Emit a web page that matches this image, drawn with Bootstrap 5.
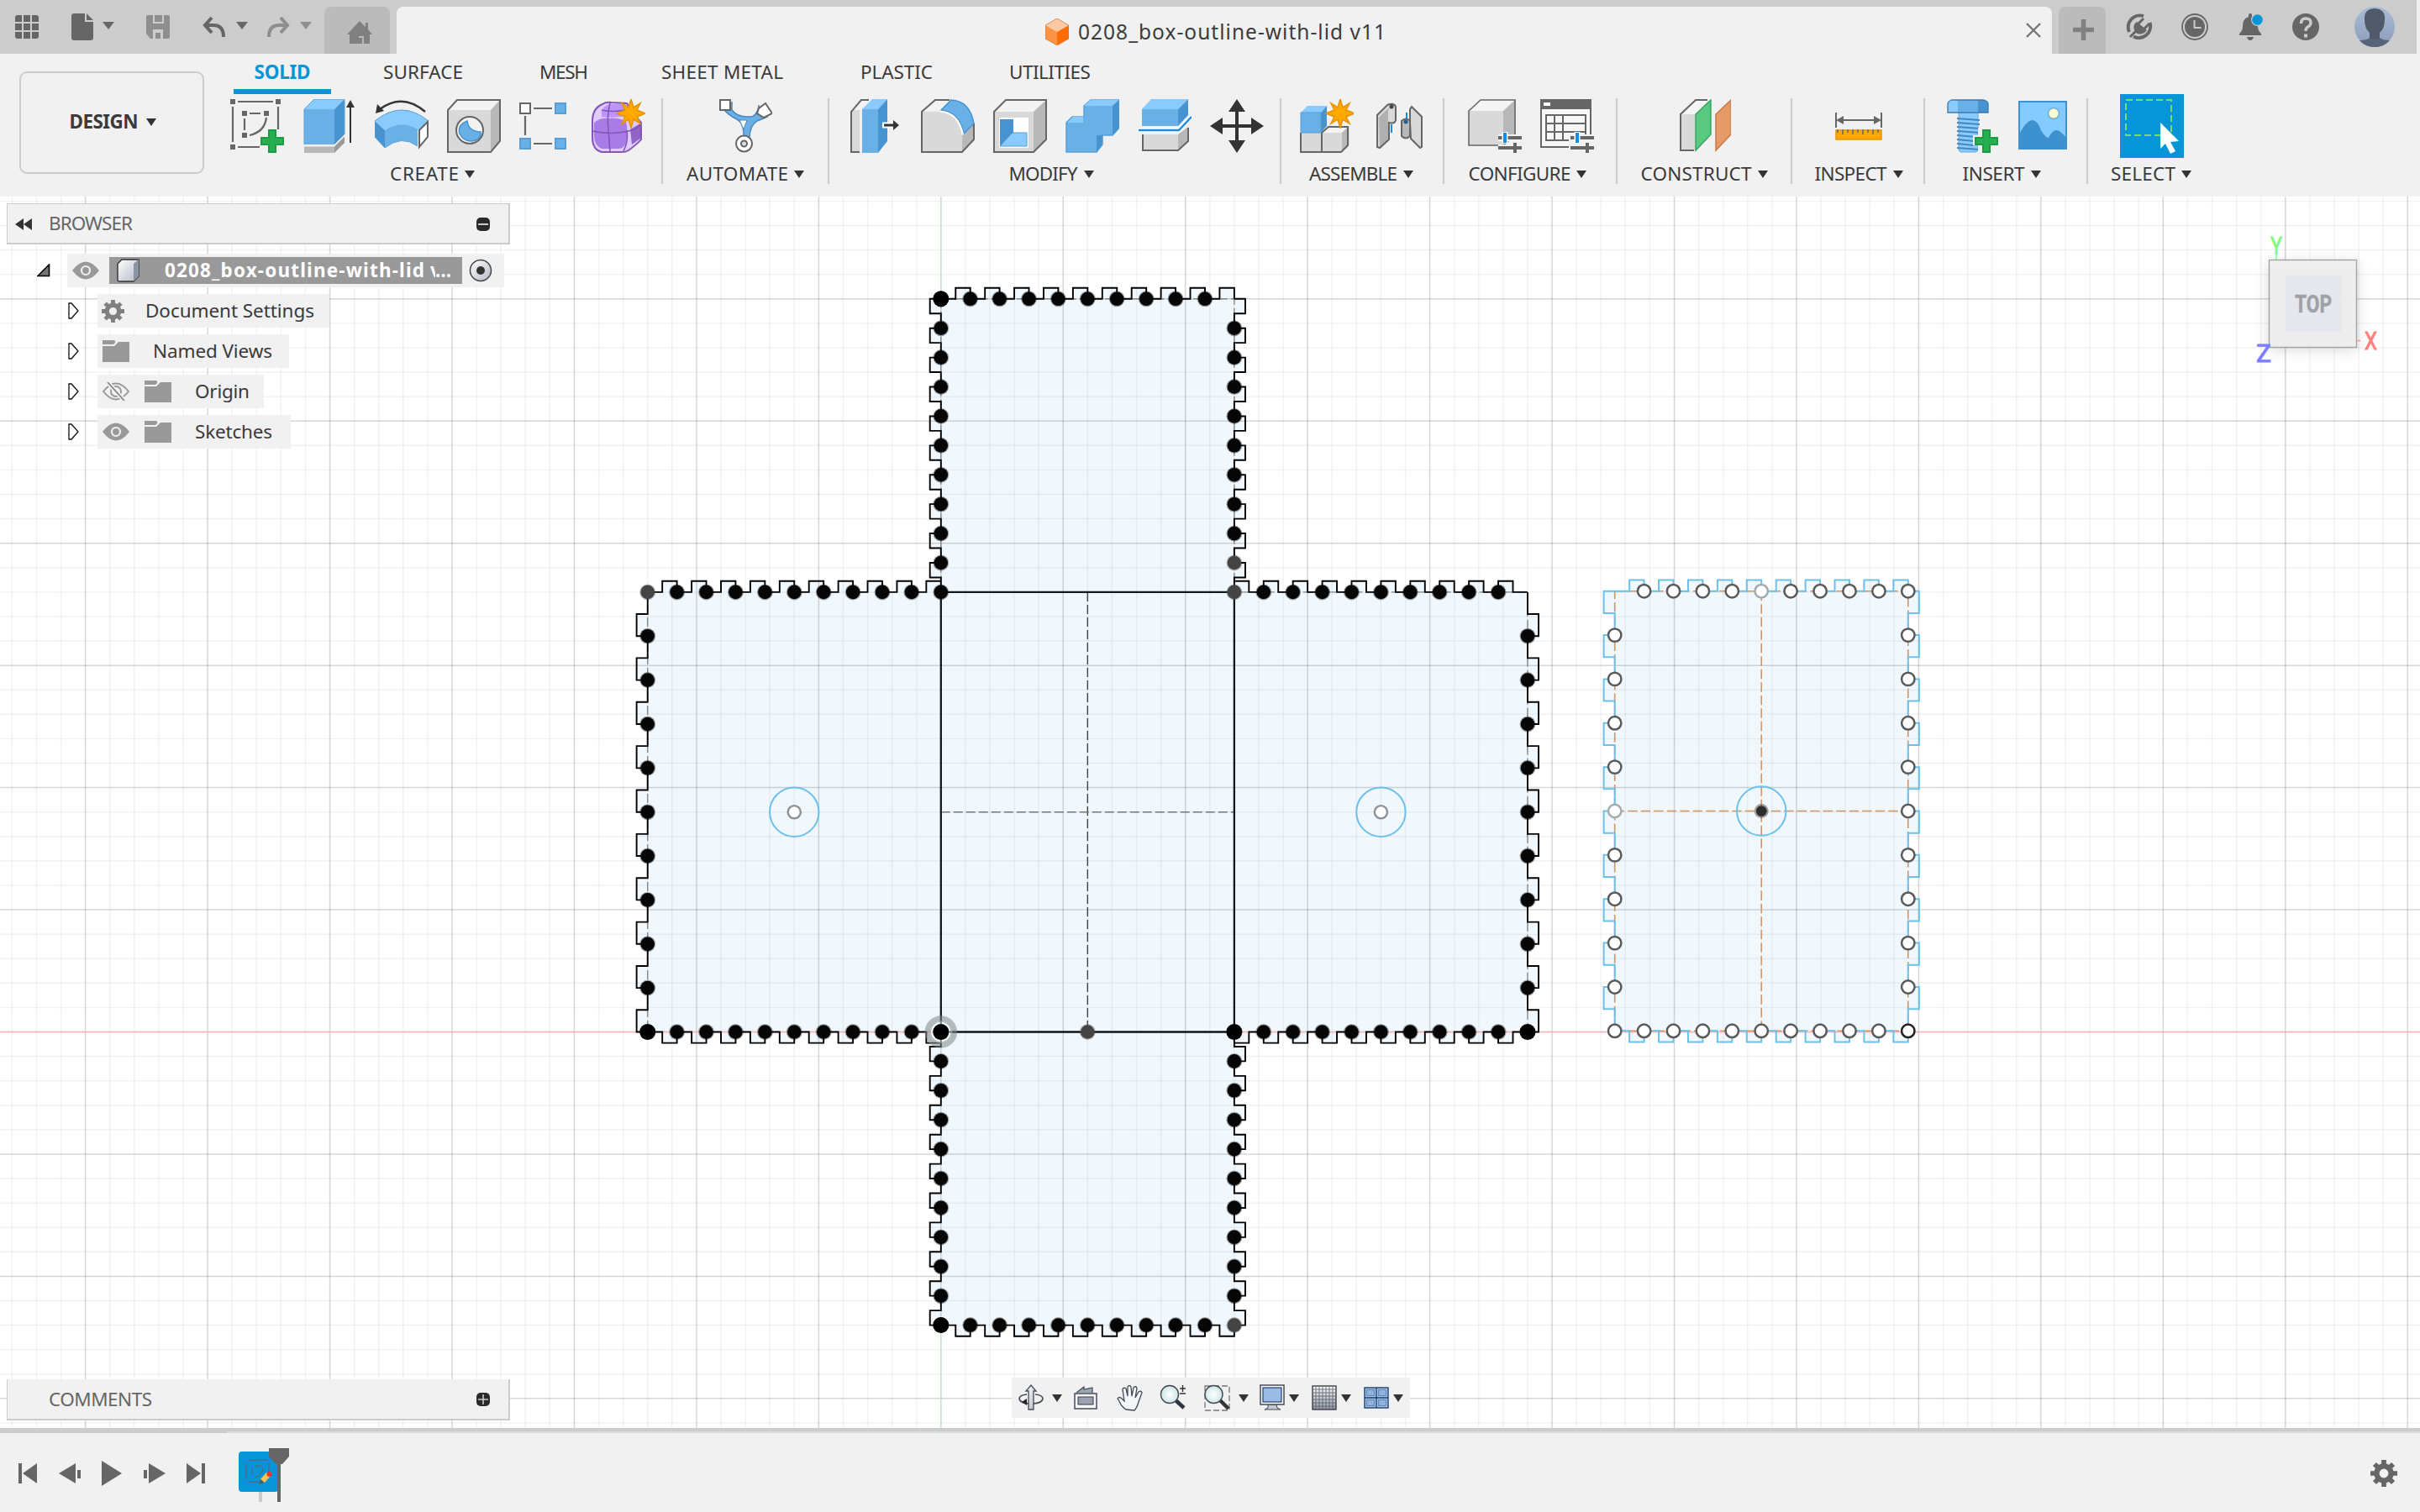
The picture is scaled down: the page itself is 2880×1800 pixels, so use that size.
<!DOCTYPE html>
<html lang="en">
<head>
<meta charset="utf-8">
<title>0208_box-outline-with-lid v11</title>
<link href="https://cdn.jsdelivr.net/npm/bootstrap@5.3.0/dist/css/bootstrap.min.css" rel="stylesheet">
<script src="https://cdn.jsdelivr.net/npm/bootstrap@5.3.0/dist/js/bootstrap.bundle.min.js"></script>
<style>
html,body{height:100%}
body{width:2880px;height:1800px;overflow:hidden;background:#f1f1f1;color:#3a3a3a;font-family:"Noto Sans","Open Sans",sans-serif;font-size:22.5px;line-height:1}
svg{display:block;flex:none}
.fit{white-space:nowrap;display:inline-block}
.titlebar{height:64px;background:#ccc;margin-right:4px;color:#666}
.quick{width:386px;padding:16px 0 0 17px}
.tri{width:0;height:0;border:solid transparent;border-width:9px 7px 0;border-top-color:#666;flex:none}
.tri-s{width:0;height:0;border:solid transparent;border-width:9px 6px 0;border-top-color:#333;flex:none}
.hometab{width:78px;height:56px;margin-top:8px;background:#bbb;border-radius:8px 8px 0 0;padding:17px 0 0 27px}
.doctab{width:1970px;height:56px;margin:8px 0 0 8px;background:#f1f1f1;border-radius:8px 8px 0 0;font-size:24.5px;color:#3c3c3c;padding:0 13px 0 772px}
.doctab .fit{padding-top:4px}
.addtab{width:56px;height:56px;margin:8px 0 0 8px;background:#bbb;border-radius:8px 8px 0 0;padding:15px 0 0 17px}
.ribbon{height:170px}
.workspace{width:220px;height:122px;border:2.5px solid #ccc;border-radius:9px;margin:21px 0 0 23px;font-weight:700;padding-left:2px}
.tools{margin-left:10px}
.rtabs{height:47px;padding:11px 0 0 2px}
.rtab{height:36px;padding:0}
.rtab.active{height:37px;color:#0696d7;font-weight:700;border-bottom:6px solid #0696d7}
.rgroup{height:102px;margin-top:6px;border-right:2px solid #ccc}
.rgroup:last-child{border:0}
.rgroup .icons{gap:22px;height:64px;margin-top:1px;padding-left:2px}
.rgroup .cap{margin-top:14px;height:24px;gap:7px}
.rgroup .cap .tri-s{margin-top:7px}
.selbox{width:76px;height:76px;background:#0696d7;margin:-6px 0}
.viewport{height:1466px;background:#fff;position:relative;overflow:hidden}
.drawing{position:absolute;left:0;top:0}
.panelhead{position:absolute;left:8px;width:599px;height:49px;background:#f1f1f1;border:1px solid #ccc;border-width:1px 2px 2px 1px;color:#666;padding:1px 22px 0 9px}
.tree{position:absolute;left:44px;top:68px}
.tree>div{margin-bottom:8px;height:40px}
.node{background:#f1f1f1;height:40px}
.node>.fit{padding-top:1px}
.rootname{background:#999;width:420px;height:32px;color:#fff;font-weight:700}
.clipv{width:6px;overflow:hidden;line-height:1.3;margin-left:7px}
.navbar2{position:absolute;left:1204px;top:1406px;width:474px;height:48px;background:#f1f1f1}
.timeline{height:100px;border-top:6px solid #ccc;position:relative}
.timeline .edge{position:absolute;left:270px;right:0;top:-2px;height:2px;background:#dcdcdc}
</style>
</head>
<body class="d-flex flex-column">
<svg width="0" height="0" class="position-absolute">
<defs>
<symbol id="star" viewBox="-18 -18 36 36"><path d="M0-17L3-7 11-12 7-4 17 0 7 4 11 12 3 7 0 17-3 7-11 12-7 4-17 0-7-4-11-12-3-7Z" fill="#ffa900" stroke="#e59400" stroke-width="1.6"/></symbol>
<symbol id="plus" viewBox="0 0 28 28"><path d="M10 1h8v9h9v8h-9v9h-8v-9H1v-8h9z" fill="#28b050" stroke="#1b9c44" stroke-width="2"/></symbol>
<symbol id="folder" viewBox="0 0 32 28"><path d="M0 1h14q2 1 1 3l-2 2H0zM0 8h14l5-5h13v24H0z" fill="#999"/></symbol>
<symbol id="eye" viewBox="0 0 32 22"><path d="M0 11Q16-10 32 11 16 32 0 11Z" fill="#999"/><circle cx="16" cy="11" r="5" fill="none" stroke="#f1f1f1" stroke-width="2.2"/></symbol>
<symbol id="gear" viewBox="-14 -14 28 28"><circle r="7.500" fill="none" stroke="currentColor" stroke-width="5.500"/><g stroke="currentColor" stroke-width="5"><path d="M0-14V-9M0 14V9M-14 0H-9M14 0H9M-9.700-9.700L-6.500-6.500M9.700 9.700L6.500 6.500M-9.700 9.700L-6.500 6.500M9.700-9.700L6.500-6.500"/></g></symbol>
<linearGradient id="silver" x1="0" y1="0" x2="1" y2="1"><stop offset="0" stop-color="#fff"/><stop offset="1" stop-color="#b4b9c6"/></linearGradient>
<radialGradient id="lens"><stop offset="0" stop-color="#fff"/><stop offset="1" stop-color="#cfe6e6"/></radialGradient>
<linearGradient id="sky" x1="0" y1="0" x2="0" y2="1"><stop offset="0" stop-color="#a9bbd4"/><stop offset="1" stop-color="#8b9dba"/></linearGradient>
<linearGradient id="fade" x1="0" y1="0" x2="0" y2="1"><stop offset="0" stop-color="#fff"/><stop offset="1" stop-color="#8f96a6"/></linearGradient>
</defs></svg>

<!-- title bar -->
<header class="titlebar d-flex">
  <div class="quick d-flex">
    <svg width="30" height="32" viewBox="0 0 30 32"><path d="M4 2h5v8H1V5q0-3 3-3zM11 2h8v8h-8zM21 2h5q3 0 3 3v5h-8zM1 12h8v8H1zM11 12h8v8h-8zM21 12h8v8h-8zM1 22h8v8H4q-3 0-3-3zM11 22h8v8h-8zM21 22h8v5q0 3-3 3h-5z" fill="#666"/></svg>
    <svg class="ms-auto" width="26" height="32" viewBox="0 0 26 32" style="margin-right:11px"><path d="M3 0h13v10h10v19q0 3-3 3H3q-3 0-3-3V3q0-3 3-3zM18 0l8 8h-8z" fill="#666"/></svg>
    <i class="tri" style="margin:10px 38px 0 0"></i>
    <svg width="28" height="32" viewBox="0 0 28 32" style="margin-right:39px"><path d="M2 2h24q2 0 2 2v24q0 2-2 2H5l-5-6V4q0-2 2-2zM8 2v10h13V2h-2v8h-9V2zM8 19v11h3v-7h6v7h3V19z" fill="#8e8e8e" fill-rule="evenodd"/></svg>
    <svg width="28" height="30" viewBox="0 0 28 30" style="margin-right:12px"><path d="M11 5L3 14l8 9M3 14h10q12 0 12 14" fill="none" stroke="#666" stroke-width="4"/></svg>
    <i class="tri" style="margin:10px 22px 0 0"></i>
    <svg width="28" height="30" viewBox="0 0 28 30" style="margin-right:12px"><path d="M17 5l8 9-8 9M25 14H15Q3 14 3 28" fill="none" stroke="#8e8e8e" stroke-width="4"/></svg>
    <i class="tri" style="margin:10px 15px 0 0;border-top-color:#8e8e8e"></i>
  </div>
  <div class="hometab"><svg width="30" height="28" viewBox="0 0 30 28"><path d="M15 0l7 7V2h3v8l5 6h-3v11h-7v-9h-6v9H3V16H0zM13 27v-7h5v7z" fill="#808080"/></svg></div>
  <div class="doctab d-flex align-items-center">
    <svg width="28" height="32" viewBox="0 0 28 32" style="margin:4px 11px 0 0"><path d="M14 0l14 8-14 8L0 8z" fill="#ffc9a3"/><path d="M0 8l14 8v16L0 24z" fill="#ff9345"/><path d="M28 8L14 16v16l14-8z" fill="#ff6c00"/><path d="M14 0l14 8v16l-14 8L0 24V8z" fill="none" stroke="#c77b45" stroke-width=".8"/></svg>
    <span class="fit" data-w="366">0208_box-outline-with-lid v11</span>
    <svg class="ms-auto" width="18" height="18" viewBox="0 0 18 18"><path d="M1 1l16 16M17 1L1 17" stroke="#777" stroke-width="2.400"/></svg>
  </div>
  <div class="addtab"><svg width="25" height="25" viewBox="0 0 25 25"><path d="M12.500 0v25M0 12.500h25" stroke="#808080" stroke-width="5.500"/></svg></div>
  <div class="d-flex" style="padding:16px 0 0 24px;gap:34px">
    <svg width="32" height="32" viewBox="0 0 32 32"><path d="M21 3.200A13.800 13.800 0 0 0 4 22M9 27.500A13.800 13.800 0 0 0 28.500 11" fill="none" stroke="#666" stroke-width="4"/><path d="M10 13l3-3 12 10-3 3q-6 3-10 0-4-4-2-10z" fill="#666"/><path d="M14 13l7-7M21 19l7-7M13 20L5 28" stroke="#666" stroke-width="3"/></svg>
    <svg width="32" height="32" viewBox="0 0 32 32"><circle cx="16" cy="16" r="15" fill="none" stroke="#666" stroke-width="1.800"/><circle cx="16" cy="16" r="12" fill="#666"/><path d="M15.500 8v9h8" fill="none" stroke="#ccc" stroke-width="2"/></svg>
    <svg width="32" height="32" viewBox="0 0 32 32"><path d="M14 1q2-2 4 0v3q7 2 7 11 0 6 4 9v2H3v-2q4-3 4-9 0-9 7-11zM12 28h8q-1 4-4 4t-4-4z" fill="#666"/><circle cx="24.500" cy="7.500" r="7.500" fill="#ccc"/><circle cx="24.500" cy="7.500" r="6.300" fill="#0696d7"/></svg>
    <svg width="32" height="32" viewBox="0 0 32 32"><circle cx="16" cy="16" r="16" fill="#666"/><path d="M10.500 12q0-6 5.500-6 6 0 6 5 0 3-3.500 5-2.500 1.500-2.500 5" fill="none" stroke="#ccc" stroke-width="3.400"/><path d="M14 24.500h4v4h-4z" fill="#ccc"/></svg>
  </div>
  <svg width="48" height="48" viewBox="0 0 48 48" style="margin:8px 0 0 42px"><defs><clipPath id="av"><circle cx="24" cy="24" r="24"/></clipPath></defs><g clip-path="url(#av)"><path d="M0 0h48v48H0z" fill="url(#sky)"/><path d="M24 2q13 1 12 13 0 11-6 16v7q3 2 12 4v8H6v-8q9-2 12-4v-7q-6-5-6-16Q11 3 24 2z" fill="#505a69"/><path d="M6 40q9 0 12-3 6 4 12 0 3 3 12 3v8H6z" fill="#566479"/></g></svg>
</header>

<!-- ribbon -->
<section class="ribbon d-flex">
  <div class="workspace d-flex align-items-center justify-content-center flex-none" style="gap:9px;padding-bottom:1px"><span class="fit" data-w="82">DESIGN</span><i class="tri-s"></i></div>
  <div class="tools">
    <nav class="rtabs d-flex">
      <div class="rtab active text-center" style="margin-left:23px;width:116px"><span class="fit" data-w="67">SOLID</span></div>
      <div class="rtab" style="margin-left:62px"><span class="fit" data-w="95">SURFACE</span></div>
      <div class="rtab" style="margin-left:91px"><span class="fit" data-w="58">MESH</span></div>
      <div class="rtab" style="margin-left:87px"><span class="fit" data-w="145">SHEET METAL</span></div>
      <div class="rtab" style="margin-left:92px"><span class="fit" data-w="86">PLASTIC</span></div>
      <div class="rtab" style="margin-left:91px"><span class="fit" data-w="97">UTILITIES</span></div>
    </nav>
    <div class="d-flex">
      <div class="rgroup" style="width:536px">
        <div class="icons d-flex justify-content-center">
          <svg width="64" height="64" viewBox="0 0 64 64"><g stroke="#666" stroke-width="2.200" fill="none"><path d="M9 3h42M3 9v42M57 9v27M9 57h26M23 17h13M17 23v14M43 22q-2 17-20 21"/></g><path d="M0 0h6v6H0zM54 0h6v6h-6zM0 54h6v6H0zM14 14h6v6h-6zM40 14h6v6h-6zM14 40h6v6h-6z" fill="#666"/><use href="#plus" x="36" y="36" width="28" height="28"/></svg>
          <svg width="64" height="64" viewBox="0 0 64 64"><path d="M2 12L14 0h36L38 12z" fill="#8acbff"/><path d="M38 12L50 0v42L38 54z" fill="#4693cf"/><path d="M2 12h36v42H2z" fill="#69b0e7"/><path d="M2 54V12L14 0h36v42" fill="none" stroke="#5a9fd4"/><path d="M2 56.500h36V64H2z" fill="#b8b8b8"/><path d="M38 56.500l12-12V52L38 64z" fill="#999"/><path d="M57 52V8" stroke="#333" stroke-width="2"/><path d="M52 10L57 1l5 9z" fill="#333"/></svg>
          <svg width="64" height="64" viewBox="0 0 64 64"><path d="M60 15Q33-8 6 12" fill="none" stroke="#333" stroke-width="2.400"/><path d="M1 17l2-11 8 8z" fill="#333"/><path d="M0 26Q32 0 64 26L52 37Q32 24 12 37z" fill="#8acbff"/><path d="M0 26l12 11v21L0 45z" fill="#4693cf"/><path d="M12 37Q32 24 51 36v20Q32 42 12 58z" fill="#69b0e7"/><path d="M0 26Q32 0 64 26M12 58Q32 42 51 56M0 26v19l12 13" fill="none" stroke="#5a9fd4"/><path d="M63 27v18L53 57V37z" fill="#fff" stroke="#666" stroke-width="2"/></svg>
          <svg width="64" height="64" viewBox="0 0 64 64"><path d="M1 13L12 1h51L52 13z" fill="#f3f3f3"/><path d="M52 13L63 1v49L52 63z" fill="#b8b8b8"/><path d="M1 13h51v50H1z" fill="#d9d9d9"/><path d="M1 13L12 1h51v49L52 63H1z" fill="none" stroke="#666" stroke-width="2"/><circle cx="27" cy="37" r="16" fill="#f3f3f3" stroke="#666" stroke-width="2"/><path d="M24 26Q12 31 15 41q6 12 19 8 7-3 6-10-15-1-16-13z" fill="#69b0e7" stroke="#4693cf" stroke-width="1.500"/></svg>
          <svg width="64" height="64" viewBox="0 0 64 64"><path d="M17 11h22M7 20v23M17 53h22" stroke="#666" stroke-width="2.200"/><path d="M1 5h12v12H1z" fill="#fff" stroke="#666" stroke-width="2"/><path d="M43 5h12v12H43zM1 47h12v12H1zM43 47h12v12H43z" fill="#69b0e7" stroke="#5a9fd4" stroke-width="2"/></svg>
          <svg width="64" height="64" viewBox="0 0 64 64"><path d="M1 24Q2 10 13 6 17 3 24 4l18 1Q52 20 59 28v20Q55 53 44 61q-3 2-8 2H12Q1 60 1 46z" fill="#e1cbfb" stroke="#8257b8" stroke-width="2"/><path d="M12 14q3-7 10-8h16l3 14q-15 3-29 1z" fill="#bd95fa"/><path d="M3 28q7-6 18-5 13-1 20 4 3 10 0 24-2 8-9 8H12Q2 55 3 38z" fill="#a87ce6"/><path d="M46 36l12-7v18l-10 7z" fill="#9264c8"/><path d="M1 38q22 5 43 0 10-2 15-8M22 4q-4 18-2 32 1 14 2 27M12 13q12 3 28 0M42 37q2 13-4 25" fill="none" stroke="#8257b8" stroke-width="1.600"/><use href="#star" x="29" y="-1" width="36" height="36"/></svg>
        </div>
        <div class="cap d-flex justify-content-center" style="padding-right:11px"><span class="fit" data-w="82">CREATE</span><i class="tri-s"></i></div>
      </div>
      <div class="rgroup" style="width:198px">
        <div class="icons d-flex justify-content-center" style="padding-left:0">
          <svg width="64" height="64" viewBox="0 0 64 64"><path d="M5 11Q13 20 22 24q9 5 8 22l-3 8h13l-3-8q0-14 9-20 8-3 12-5L48 8q-2 13-11 13-14 1-21-8V4L5 13z" fill="#69b0e7" stroke="#4a86ba" stroke-width="1.500"/><path d="M25 25h9l-4 11z" fill="#fff" stroke="#4a86ba"/><path d="M2 1h12v12H2z" fill="#fff" stroke="#666" stroke-width="2"/><path d="M56 5l8 12-10 5-8-5 2-6z" fill="#fff" stroke="#666" stroke-width="2"/><circle cx="30.500" cy="53" r="9.500" fill="#fff" stroke="#666" stroke-width="2"/><circle cx="30.500" cy="53" r="3.500" fill="#ddd" stroke="#666" stroke-width="2"/></svg>
        </div>
        <div class="cap d-flex justify-content-center"><span class="fit" data-w="121">AUTOMATE</span><i class="tri-s"></i></div>
      </div>
      <div class="rgroup" style="width:538px">
        <div class="icons d-flex justify-content-center" style="padding-left:4px">
          <svg width="64" height="64" viewBox="0 0 64 64"><path d="M3 13L15 1h9L13 13v50H3z" fill="#d9d9d9"/><path d="M3 13L15 1h9L13 13z" fill="#f3f3f3"/><path d="M13 63H3V15L15 1h9" fill="none" stroke="#666" stroke-width="2"/><path d="M16 12L28 0h18L35 12z" fill="#8acbff"/><path d="M35 12L46 0v50L35 64z" fill="#4693cf"/><path d="M16 12h19v52H16z" fill="#69b0e7"/><path d="M40 31h11" stroke="#fff" stroke-width="7"/><path d="M42 31h13" stroke="#333" stroke-width="3"/><path d="M53 25l7 6-7 6z" fill="#333"/></svg>
          <svg width="64" height="64" viewBox="0 0 64 64"><path d="M1 15L17 1h19L24 13z" fill="#f3f3f3"/><path d="M1 15h22q21 2 26 28v20H1z" fill="#d9d9d9"/><path d="M49 43l14-14v19L49 63z" fill="#b8b8b8"/><path d="M34 1H17L1 15v48h48l14-15V29" fill="none" stroke="#666" stroke-width="2"/><path d="M24 13L36 1q22 1 27 28L51 41Q46 16 24 13z" fill="#69b0e7" stroke="#4693cf" stroke-width="1.500"/><path d="M23 14.500q22 2 27 28" fill="none" stroke="#fff" stroke-width="2"/></svg>
          <svg width="64" height="64" viewBox="0 0 64 64"><path d="M1 15L15 1h48L48 15z" fill="#f3f3f3"/><path d="M48 15L63 1v47L48 63z" fill="#b8b8b8"/><path d="M1 15h47v48H1z" fill="#d9d9d9"/><path d="M1 15L15 1h48v47L48 63H1z" fill="none" stroke="#666" stroke-width="2"/><path d="M7 22h35v36H7z" fill="#fff"/><path d="M8 24h16v16L8 56z" fill="#4693cf"/><path d="M8 56l15-16h17v16z" fill="#8acbff" stroke="#5a9fd4"/></svg>
          <svg width="64" height="64" viewBox="0 0 64 64"><path d="M1 28l7-7h14V8l8-7h34v33l-8 9H44v11l-7 9H1z" fill="#69b0e7" stroke="#5a9fd4" stroke-width="1.500"/><path d="M2 28l7-7h12v7zM22 8l8-7h33l-7 7z" fill="#8acbff"/><path d="M56 8l8-7v33l-8 9zM37 43h7v11l-7 9z" fill="#4693cf"/></svg>
          <svg width="64" height="64" viewBox="0 0 64 64"><path d="M5 12L16 0h44L48 12z" fill="#8acbff"/><path d="M48 12L60 0v19L48 32z" fill="#4693cf"/><path d="M5 12h43v20H5z" fill="#69b0e7"/><path d="M1 37h48L63 21" fill="none" stroke="#fff" stroke-width="5"/><path d="M1 37h48L64 21" fill="none" stroke="#1b8be0" stroke-width="2.400"/><path d="M5 42h43v19H5z" fill="#d9d9d9"/><path d="M48 42l12-9v17L48 61z" fill="#b8b8b8"/><path d="M6 42v19h42l12-11V34" fill="none" stroke="#666" stroke-width="2"/></svg>
          <svg width="64" height="64" viewBox="0 0 64 64"><path d="M32 10v44M10 32h44" stroke="#333" stroke-width="4"/><path d="M32 0l10 15H22zM32 64L22 49h20zM0 32l15-10v20zM64 32L49 42V22z" fill="#333"/></svg>
        </div>
        <div class="cap d-flex justify-content-center" style="padding-right:8px"><span class="fit" data-w="82">MODIFY</span><i class="tri-s"></i></div>
      </div>
      <div class="rgroup" style="width:194px">
        <div class="icons d-flex justify-content-center">
          <svg width="64" height="64" viewBox="0 0 64 64"><path d="M1 40h50l8-8v23l-8 8H1z" fill="#d9d9d9"/><path d="M26 40l8-7h23l-7 7z" fill="#f3f3f3"/><path d="M50 40l7-7v22l-7 8z" fill="#b8b8b8"/><path d="M1 40v23h48l8-8V33H34l-8 7v23" fill="none" stroke="#666" stroke-width="2"/><path d="M1 16l8-8h23l-7 8z" fill="#8acbff"/><path d="M25 16l7-8v24l-7 8z" fill="#4693cf"/><path d="M1 16h24v24H1z" fill="#69b0e7" stroke="#5a9fd4"/><use href="#star" x="30" y="-1" width="36" height="36"/></svg>
          <svg width="64" height="64" viewBox="0 0 64 64"><path d="M6 19L18 7q8-3 10 2v16q-1 5-10 3v20L9 58l-3-1z" fill="#d9d9d9"/><path d="M8 22L20 10v38L9 58z" fill="#b0b0b0"/><path d="M19 12q8 5 9-2v16q-4 5-9 1z" fill="#d9d9d9"/><path d="M6 19L18 7q8-3 10 2v16q-1 5-8 3v20L9 58l-3-1z" fill="none" stroke="#666" stroke-width="2"/><circle cx="23" cy="9" r="2.500" fill="#444"/><path d="M23 30v10M41 16v13" stroke="#1b8be0" stroke-width="2"/><path d="M45 28V12l2-3 12 12v36l-2 1-11-11z" fill="#d9d9d9" stroke="#666" stroke-width="2"/><path d="M35 26q5-5 10 0v18q-5 5-10 0z" fill="#b8b8b8" stroke="#666" stroke-width="2"/><circle cx="40" cy="27" r="2.500" fill="#245b8b"/></svg>
        </div>
        <div class="cap d-flex justify-content-center" style="padding-right:2px"><span class="fit" data-w="105">ASSEMBLE</span><i class="tri-s"></i></div>
      </div>
      <div class="rgroup" style="width:206px">
        <div class="icons d-flex justify-content-center">
          <svg width="64" height="64" viewBox="0 0 64 64"><path d="M1 14L15 1h41L42 14z" fill="#f5f5f5"/><path d="M42 14L56 1v42L42 55z" fill="#b8b8b8"/><path d="M1 14h41v41H1z" fill="#d9d9d9"/><path d="M1 14L15 1h41v42L42 55H1z" fill="none" stroke="#666" stroke-width="1.600"/><path d="M36 46h28M36 58h28" stroke="#f1f1f1" stroke-width="8"/><path d="M36 46h28M36 58h28" stroke="#666" stroke-width="4"/><path d="M44 39v14" stroke="#fff" stroke-width="7"/><path d="M44 40v12" stroke="#1b8be0" stroke-width="4"/><path d="M56 52v12" stroke="#666" stroke-width="4"/></svg>
          <svg width="64" height="64" viewBox="0 0 64 64"><path d="M1 0h59v57H1z" fill="#f7f7f7" stroke="#666" stroke-width="2"/><path d="M0 0h61v12H0z" fill="#666"/><path d="M4 4h8v4H4z" fill="#fff"/><path d="M7 19h47v30H7zM7 29h47M7 39h47M17 19v30M27 19v30" fill="none" stroke="#666" stroke-width="2"/><path d="M34 42h30v22H34z" fill="#f1f1f1"/><path d="M36 46h28M36 58h28" stroke="#666" stroke-width="4"/><path d="M44 39v14" stroke="#fff" stroke-width="7"/><path d="M44 40v12" stroke="#1b8be0" stroke-width="4"/><path d="M56 52v12" stroke="#666" stroke-width="4"/></svg>
        </div>
        <div class="cap d-flex justify-content-center" style="padding-right:6px"><span class="fit" data-w="122">CONFIGURE</span><i class="tri-s"></i></div>
      </div>
      <div class="rgroup" style="width:208px">
        <div class="icons d-flex justify-content-center" style="padding-left:0">
          <svg width="64" height="64" viewBox="0 0 64 64"><path d="M4 18L22 1h16L22 18v43H4z" fill="#f5f5f5"/><path d="M4 18h18v43H4z" fill="#d9d9d9"/><path d="M20 61H4V18L22 1h14" fill="none" stroke="#666" stroke-width="2"/><path d="M22 18L40 1v41L22 61z" fill="#59c982" stroke="#3da565" stroke-width="1.500"/><path d="M46 18L64 1v41L46 61z" fill="#e69a66" stroke="#c77b48" stroke-width="1.500"/></svg>
        </div>
        <div class="cap d-flex justify-content-center"><span class="fit" data-w="132">CONSTRUCT</span><i class="tri-s"></i></div>
      </div>
      <div class="rgroup" style="width:158px">
        <div class="icons d-flex justify-content-center">
          <svg width="64" height="64" viewBox="0 0 64 64"><path d="M5 16v18M59 16v18M10 25h44" stroke="#666" stroke-width="2"/><path d="M5 25l9-5v10zM59 25l-9-5v10z" fill="#666"/><path d="M5 37h54v11H5z" fill="#ffa900" stroke="#e59400" stroke-width="1.500"/><path d="M7 36v4M13 36v6M19 36v4M25 36v6M31 36v4M37 36v6M43 36v4M49 36v6M55 36v4" stroke="#666" stroke-width="1.500"/></svg>
        </div>
        <div class="cap d-flex justify-content-center" style="padding-left:2px"><span class="fit" data-w="86">INSPECT</span><i class="tri-s"></i></div>
      </div>
      <div class="rgroup" style="width:194px">
        <div class="icons d-flex justify-content-center" style="padding-left:4px">
          <svg width="64" height="64" viewBox="0 0 64 64"><path d="M17 15h23v46l-2 2H19l-2-2z" fill="#8acbff" stroke="#69a5d5"/><path d="M15 23l27 2M15 28l27 2M15 33l27 2M15 38l27 2M15 43l22 2M15 48l20 2M15 53l20 2M15 58l27 2" stroke="#4587bb" stroke-width="2"/><path d="M8 1h38q5 1 6 4v11H4V5q1-3 4-4z" fill="#8acbff"/><path d="M16 1h24v15H16z" fill="#69b0e7"/><path d="M40 1h6q5 1 6 4v11H40z" fill="#4693cf"/><path d="M8 1h38q5 1 6 4v11H4V5q1-3 4-4z" fill="none" stroke="#4079a8" stroke-width="1.300"/><path d="M34 43h6v-9h20v30H40v-9h-6z" fill="#f1f1f1"/><use href="#plus" x="36" y="36" width="28" height="28"/></svg>
          <svg width="64" height="64" viewBox="0 0 64 64"><path d="M3 3h56v56H3z" fill="#84cbff" stroke="#3d91cf" stroke-width="2"/><path d="M3 42q8-16 15-17 7 0 11 12 5 9 9 9 4-8 8-9 5-1 12 8v13H3z" fill="#3d91cf"/><circle cx="44" cy="17" r="6.500" fill="#ffface" stroke="#6aaddc" stroke-width="1.500"/></svg>
        </div>
        <div class="cap d-flex justify-content-center" style="padding-right:10px"><span class="fit" data-w="74">INSERT</span><i class="tri-s"></i></div>
      </div>
      <div class="rgroup" style="width:150px">
        <div class="icons d-flex justify-content-center">
          <div class="selbox"><svg width="76" height="76" viewBox="0 0 76 76"><path d="M7 7h54v42H7z" fill="none" stroke="#73dd73" stroke-width="2" stroke-dasharray="8 4"/><path d="M48 34l22 22-10 1 6 11-6 3-6-12-6 6z" fill="#fff"/></svg></div>
        </div>
        <div class="cap d-flex justify-content-center"><span class="fit" data-w="77">SELECT</span><i class="tri-s"></i></div>
      </div>
    </div>
  </div>
</section>

<!-- modelling viewport -->
<main class="viewport">
  <svg class="drawing" id="sketch" width="2880" height="1466" viewBox="0 234 2880 1466"></svg>

  <div class="panelhead d-flex align-items-center" style="top:8px">
    <svg width="20" height="14" viewBox="0 0 20 14"><path d="M10 0v14L0 7zM20 0v14L10 7z" fill="#333"/></svg>
    <span class="fit" data-w="100" style="margin-left:20px">BROWSER</span>
    <svg class="ms-auto" width="16" height="16" viewBox="0 0 16 16"><rect width="16" height="16" rx="5" fill="#2a2a2a"/><path d="M2 8h12" stroke="#ccc" stroke-width="2"/></svg>
  </div>
  <div class="tree">
    <div class="d-flex align-items-center">
      <svg width="16" height="16" viewBox="0 0 16 16" style="margin-right:20px"><path d="M1 14.500L14.500 1v13.500z" fill="#777" stroke="#000" stroke-width="1.600"/></svg>
      <div class="node d-flex align-items-center" style="width:520px;padding-left:6px">
        <svg width="32" height="22"><use href="#eye" width="32" height="22"/></svg>
        <div class="rootname d-flex align-items-center" style="margin-left:12px;padding-left:9px">
          <svg width="27" height="30" viewBox="0 0 27 30"><path d="M1 7l5-5h20v20l-6 6H3q-2 0-2-2z" fill="url(#silver)" stroke="#333" stroke-width="1.400"/><path d="M20 7l6-5v20l-6 6z" fill="#8c93a5"/></svg>
          <span class="fit" data-w="309" style="margin-left:30px;padding-top:1px">0208_box-outline-with-lid</span><span class="clipv">v</span><span>…</span>
        </div>
        <svg width="28" height="30" viewBox="0 0 28 30" style="margin-left:8px"><circle cx="14" cy="15" r="12.500" fill="url(#silver)" stroke="#444" stroke-width="1.500"/><circle cx="14" cy="15" r="5" fill="#333"/></svg>
      </div>
    </div>
    <div class="d-flex align-items-center" style="padding-left:37px">
      <svg width="13" height="20" viewBox="0 0 13 20"><path d="M1 1h3l8 9-8 9H1z" fill="#fff" stroke="#111" stroke-width="1.300"/></svg>
      <div class="node d-flex align-items-center" style="width:276px;margin-left:22px;padding-left:5px"><svg width="27" height="27" color="#808080"><use href="#gear" width="27" height="27"/></svg><span class="fit" data-w="201" style="margin-left:25px">Document Settings</span></div>
    </div>
    <div class="d-flex align-items-center" style="padding-left:37px">
      <svg width="13" height="20" viewBox="0 0 13 20"><path d="M1 1h3l8 9-8 9H1z" fill="#fff" stroke="#111" stroke-width="1.300"/></svg>
      <div class="node d-flex align-items-center" style="width:228px;margin-left:22px;padding-left:6px"><svg width="32" height="28"><use href="#folder" width="32" height="28"/></svg><span class="fit" data-w="142" style="margin-left:28px">Named Views</span></div>
    </div>
    <div class="d-flex align-items-center" style="padding-left:37px">
      <svg width="13" height="20" viewBox="0 0 13 20"><path d="M1 1h3l8 9-8 9H1z" fill="#fff" stroke="#111" stroke-width="1.300"/></svg>
      <div class="node d-flex align-items-center" style="width:198px;margin-left:22px;padding-left:6px"><svg width="32" height="22" viewBox="0 0 32 22"><path d="M1 11Q16-8 31 11 16 30 1 11Z" fill="none" stroke="#999" stroke-width="2"/><circle cx="16" cy="11" r="6" fill="none" stroke="#999" stroke-width="2"/><circle cx="16" cy="11" r="2" fill="#999"/><path d="M6 0l20 22" stroke="#f1f1f1" stroke-width="5"/><path d="M6 0l20 22" stroke="#888" stroke-width="1.800"/></svg><svg width="32" height="28" style="margin-left:18px"><use href="#folder" width="32" height="28"/></svg><span class="fit" data-w="65" style="margin-left:28px">Origin</span></div>
    </div>
    <div class="d-flex align-items-center" style="padding-left:37px">
      <svg width="13" height="20" viewBox="0 0 13 20"><path d="M1 1h3l8 9-8 9H1z" fill="#fff" stroke="#111" stroke-width="1.300"/></svg>
      <div class="node d-flex align-items-center" style="width:230px;margin-left:22px;padding-left:6px"><svg width="32" height="22"><use href="#eye" width="32" height="22"/></svg><svg width="32" height="28" style="margin-left:18px"><use href="#folder" width="32" height="28"/></svg><span class="fit" data-w="92" style="margin-left:28px">Sketches</span></div>
    </div>
  </div>

  <div class="panelhead d-flex align-items-center" style="top:1408px;border-top:0">
    <span class="fit" data-w="123" style="margin-left:40px">COMMENTS</span>
    <svg class="ms-auto" width="16" height="16" viewBox="0 0 16 16"><rect width="16" height="16" rx="5" fill="#2a2a2a"/><path d="M2 8h12M8 2v12" stroke="#ccc" stroke-width="1.600"/></svg>
  </div>

  <div class="navbar2 d-flex align-items-center" style="padding-left:8px">
    <svg width="30" height="32" viewBox="0 0 30 32"><path d="M10 12Q1 13 1 17q1 6 14 6t14-6q0-4-9-5" fill="none" stroke="#444b57" stroke-width="1.600"/><path d="M12 30V8H9l6-7 6 7h-3v22z" fill="url(#silver)" stroke="#444b57" stroke-width="1.300"/><path d="M4 21l6-4v8z" fill="#222"/></svg>
    <i class="tri-s" style="margin:0 14px 0 10px"></i>
    <svg width="28" height="30" viewBox="0 0 28 30"><path d="M3 9l9-7v3l10-2v6" fill="#9aa7ae" stroke="#444b57" stroke-width="1.200"/><rect x="1" y="10" width="26" height="18" fill="#f7f7f9" stroke="#444b57" stroke-width="1.500"/><rect x="5" y="14" width="18" height="9" fill="#9da2b3" stroke="#333a46"/></svg>
    <svg width="31" height="32" viewBox="0 0 31 32" style="margin-left:23px"><path d="M11 30Q5 26 3 20L1 17q2-3 5 0l3 3L7 6q1-3 4-1l2 9V3q2-3 4 0l1 11 2-10q3-3 4 1l-2 11 4-7q3-2 4 1l-4 11q-2 7-5 10z" fill="#f5f6f8" stroke="#444b57" stroke-width="1.300"/></svg>
    <svg width="31" height="32" viewBox="0 0 31 32" style="margin-left:20px"><path d="M18 18l11 10" stroke="#2c333d" stroke-width="4.500"/><circle cx="12" cy="12" r="10.500" fill="url(#lens)" stroke="#444b57" stroke-width="1.400"/><path d="M24 5h7M27.500 1v8M24 11h7" stroke="#333" stroke-width="1.400"/></svg>
    <svg width="31" height="32" viewBox="0 0 31 32" style="margin-left:22px"><path d="M1 2h29v29H1z" fill="none" stroke="#777" stroke-width="1.300" stroke-dasharray="7 3"/><path d="M18 18l11 11" stroke="#333" stroke-width="4.500"/><circle cx="11.500" cy="12" r="10.500" fill="url(#lens)" stroke="#444b57" stroke-width="1.400"/></svg>
    <i class="tri-s" style="margin:0 13px 0 10px"></i>
    <svg width="30" height="32" viewBox="0 0 30 32"><path d="M10 24h10l1 4 4 2H6l4-2z" fill="#c5c9d2" stroke="#444b57"/><rect x="1" y="1" width="28" height="23" fill="#fff" stroke="#444b57" stroke-width="1.500"/><rect x="4" y="4" width="22" height="17" fill="#9abce3" stroke="#2b4d80" stroke-width="1.300"/></svg>
    <i class="tri-s" style="margin:0 15px 0 5px"></i>
    <svg width="30" height="30" viewBox="0 0 30 30"><rect x="1" y="1" width="28" height="28" fill="url(#fade)" stroke="#333" stroke-width="1.300"/><path d="M5 1v28M9 1v28M13 1v28M17 1v28M21 1v28M25 1v28M1 5h28M1 9h28M1 13h28M1 17h28M1 21h28M1 25h28" stroke="#555b66" stroke-width=".8"/></svg>
    <i class="tri-s" style="margin:0 15px 0 5px"></i>
    <svg width="30" height="26" viewBox="0 0 30 26"><rect x="1" y="1" width="28" height="24" fill="#a4c2e4" stroke="#1f3f6b" stroke-width="1.400"/><path d="M15 1v24M1 13h28" stroke="#1f3f6b" stroke-width="1.300"/><path d="M3.500 3.500h9v7h-9zM17.500 3.500h9v7h-9zM3.500 15.500h9v7h-9zM17.500 15.500h9v7h-9z" fill="#8fb4dd" stroke="#5b85b8"/></svg>
    <i class="tri-s" style="margin:0 0 0 5px"></i>
  </div>
</main>

<!-- timeline -->
<footer class="timeline d-flex">
  <div class="edge"></div>
  <div class="d-flex align-items-center" style="padding:0 0 0 22px;height:96px;gap:25.500px;color:#666">
    <svg width="22" height="24" viewBox="0 0 22 24"><path d="M0 0h4v24H0zM22 0v24L5 12z" fill="#666"/></svg>
    <svg width="26" height="24" viewBox="0 0 26 24"><path d="M20 0v24L0 12zM22 8h4v10h-4z" fill="#666"/></svg>
    <svg width="24" height="30" viewBox="0 0 24 30"><path d="M0 0l24 15L0 30z" fill="#666"/></svg>
    <svg width="26" height="24" viewBox="0 0 26 24"><path d="M0 8h4v10H0zM6 0l20 12L6 24z" fill="#666"/></svg>
    <svg width="22" height="24" viewBox="0 0 22 24"><path d="M18 0h4v24h-4zM0 0l17 12L0 24z" fill="#666"/></svg>
  </div>
  <svg width="62" height="66" viewBox="0 0 62 66" style="margin:18px 0 0 40px"><path d="M24 52h4v12h-4z" fill="#ccc"/><rect y="4" width="47" height="48" rx="4" fill="#0696d7"/><g fill="none" stroke="#4b6f86" stroke-width="1.500"><path d="M12 14h22M9 18v19M36 18v12M12 40h12M19 21h8M16 24v7M29 24q-1 9-9 10"/></g><path d="M8 12h4v4H8zM34 12h4v4h-4zM8 38h4v4H8zM14 19h4v4h-4zM27 19h4v4h-4zM14 32h4v4h-4z" fill="#1788f0"/><path d="M26 37l7-8 5 4-7 8z" fill="#ffc04d"/><path d="M24 43l2-6 4 4z" fill="#555"/><circle cx="36.500" cy="31" r="3" fill="#e33"/><path d="M36 0h24v10l-8 9h-8l-8-9z" fill="#666"/><path d="M46 14h4v50h-4z" fill="#666"/></svg>
  <svg class="ms-auto" width="32" height="32" style="margin:32px 27px 0 0" color="#666"><use href="#gear" width="32" height="32"/></svg>
</footer>

<script>
/* Sketch geometry: one minor grid cell is U pixels, world origin at (OX, OY). */
const U = 29.09, OX = 1119.8, OY = 1228.5, W = 12 * U, H = 18 * U, T = 13.1;
let out = '';
const add = s => out += s;

/* Comb edge from (x,y) along (dx,dy), ten steps, tooth along normal (nx,ny) in half 0 or 1 of a step. */
function comb(x, y, dx, dy, nx, ny, half) {
  let d = `M${x} ${y}`;
  for (let i = 0; i < 10; i++) {
    const p = t => [x + dx * (i + t) / 10, y + dy * (i + t) / 10];
    const a = p(half / 2), b = p(half / 2 + .5), e = p(1);
    d += `L${a[0]} ${a[1]}L${a[0] + nx * T} ${a[1] + ny * T}L${b[0] + nx * T} ${b[1] + ny * T}L${b[0]} ${b[1]}L${e[0]} ${e[1]}`;
  }
  return d;
}
const x0 = OX - W, x1 = OX, x2 = OX + W, x3 = OX + 2 * W, y0 = OY - H - W, y1 = OY - H, y2 = OY, y3 = OY + W;
const edges = [
  [x1, y0, W, 0, 0, -1, 1], [x1, y0, 0, W, -1, 0, 0], [x2, y0, 0, W, 1, 0, 0],
  [x0, y1, W, 0, 0, -1, 1], [x0, y1, 0, H, -1, 0, 1], [x0, y2, W, 0, 0, 1, 1],
  [x2, y1, W, 0, 0, -1, 0], [x3, y1, 0, H, 1, 0, 1], [x2, y2, W, 0, 0, 1, 0],
  [x1, y2, 0, W, -1, 0, 1], [x2, y2, 0, W, 1, 0, 1], [x1, y3, W, 0, 0, 1, 1]];
const lx = 1921.7, ly = 703.7, lr = lx + W, lb = ly + H;
const lid = [[lx, ly, W, 0, 0, -1, 1], [lx, ly, 0, H, -1, 0, 0], [lr, ly, 0, H, 1, 0, 0], [lx, lb, W, 0, 0, 1, 1]];
const body = edges.map(e => comb(...e)).join(''), lidPath = lid.map(e => comb(...e)).join('');

/* filled profiles */
add(`<g fill="#f0f8fe"><path d="M${x1} ${y0}H${x2}V${y1}H${x3}V${y2}H${x2}V${y3}H${x1}V${y2}H${x0}V${y1}H${x1}z"/><path d="M${lx} ${ly}H${lr}V${lb}H${lx}z"/><path d="${body}${lidPath}"/></g>`);
/* grid */
for (let i = -39; i < 62; i++) { const x = OX + i * U, m = i % 5 == 0; add(`<path d="M${x} 234V1700" stroke="#000" stroke-opacity="${m ? .16 : .05}" stroke-width="1.500"/>`); }
for (let i = -35; i < 18; i++) { const y = OY + i * U, m = i % 5 == 0; add(`<path d="M0 ${y}H2880" stroke="#000" stroke-opacity="${m ? .16 : .05}" stroke-width="1.500"/>`); }
add(`<path d="M0 ${OY}H2880" stroke="#ffb4b4" stroke-width="1.500"/><path d="M${OX} 234V${y0}M${OX} ${y3}V1700" stroke="#b9f3b9" stroke-width="1"/>`);
/* construction lines */
add(`<g fill="none" stroke="#444" stroke-width="1.400" stroke-dasharray="11 4"><path d="M${x1 + W / 2} ${y1}V${y2}"/><path d="M${x1} ${OY - H / 2}H${x2}" stroke="#777"/><path d="M${x1} ${y0}H${x2}V${y1}H${x3}V${y2}M${x0} ${y1}V${y2}M${x1} ${y0}V${y1}" stroke="#888"/></g>`);
add(`<path d="M${x1} ${y1}H${x2}V${y2}H${x1}z" fill="none" stroke="#101a1a" stroke-width="2.300"/>`);
add(`<path d="${body}" fill="none" stroke="#000" stroke-width="1.900"/>`);
add(`<g fill="none" stroke="#d2955f" stroke-width="1.600" stroke-dasharray="11.500 4"><path d="M${lx} ${ly}H${lr}V${lb}H${lx}zM${lx + W / 2} ${ly}V${lb}"/><path d="M${lx} ${ly + H / 2}H${lr}"/></g>`);
add(`<path d="${lidPath}" fill="none" stroke="#6cc1ea" stroke-width="2"/>`);
/* handle holes */
for (const [x, y] of [[x0 + W / 2, OY - H / 2], [x2 + W / 2, OY - H / 2], [lx + W / 2, ly + H / 2]]) add(`<circle cx="${x}" cy="${y}" r="29.200" fill="none" stroke="#6cc1ea" stroke-width="2"/>`);
for (const x of [x0 + W / 2, x2 + W / 2]) add(`<circle cx="${x}" cy="${OY - H / 2}" r="7.600" fill="#fff" stroke="#8c9194" stroke-width="2.400"/>`);
/* origin halo */
add(`<circle cx="${x1}" cy="${y2}" r="13.500" fill="#fff" fill-opacity=".5"/><circle cx="${x1}" cy="${y2}" r="15.500" fill="none" stroke="#7d8686" stroke-opacity=".55" stroke-width="7.500"/>`);
/* coincident points */
const pts = new Map(), key = (x, y) => x.toFixed(1) + ',' + y.toFixed(1);
for (const [x, y, dx, dy] of edges) for (let i = 0; i <= 10; i++) pts.set(key(x + dx * i / 10, y + dy * i / 10), '#060606');
pts.delete(key(x2, y0)); pts.delete(key(x3, y1));
for (const p of [[x0, y1], [x2, y1], [x2, y1 - W / 10], [x2, y3], [x1 + W / 2, y2]]) pts.set(key(...p), '#444');
for (const [k, c] of pts) { const [x, y] = k.split(','); add(`<circle cx="${x}" cy="${y}" r="9.500" fill="${c}" fill-opacity=".35"/><circle cx="${x}" cy="${y}" r="8.300" fill="${c}"/>`); }
for (const [x, y] of [[x0, y2], [x1, y2], [x2, y2], [x3, y2], [x1, y0], [x1, y3]]) add(`<circle cx="${x}" cy="${y}" r="9.500" fill="#000"/>`);
const open = new Map();
for (const [x, y, dx, dy] of lid) for (let i = 0; i <= 10; i++) open.set(key(x + dx * i / 10, y + dy * i / 10), '#5a5a5a');
open.delete(key(lx, ly)); open.set(key(lx + W / 2, ly), '#a3abaf'); open.set(key(lx, ly + H / 2), '#a3abaf'); open.set(key(lr, lb), '#222');
for (const [k, c] of open) { const [x, y] = k.split(','); add(`<circle cx="${x}" cy="${y}" r="7.700" fill="#fff" stroke="${c}" stroke-width="2.500"/>`); }
add(`<circle cx="${lx + W / 2}" cy="${ly + H / 2}" r="8.500" fill="#555" fill-opacity=".55"/><circle cx="${lx + W / 2}" cy="${ly + H / 2}" r="6.300" fill="#2c2c2c"/>`);
/* view cube */
add(`<g font-family="Roboto,sans-serif" font-size="29.500"><path d="M2709 304v6" stroke="#8f8" stroke-width="1.500"/><path d="M2804 405.500h5" stroke="#f99" stroke-width="1.500"/>
<rect x="2700.500" y="309.500" width="104" height="104" fill="#eee" fill-opacity=".9" stroke="#a2a2a2" stroke-width="1.400" style="filter:drop-shadow(0 3px 8px rgba(0,0,0,.15))"/><rect x="2720" y="328" width="66" height="67" fill="#e5e7ec"/>
<text x="2731" y="372" textLength="44" lengthAdjust="spacingAndGlyphs" font-weight="700" fill="#9da1a8" stroke="#9da1a8" stroke-width=".5">TOP</text>
<g stroke-width=".9"><text x="2702" y="303" textLength="14" lengthAdjust="spacingAndGlyphs" fill="#7dfb7d" stroke="#7dfb7d">Y</text><text x="2814" y="416" textLength="15" lengthAdjust="spacingAndGlyphs" fill="#ff7d7d" stroke="#ff7d7d">X</text><text x="2685" y="431" textLength="18" lengthAdjust="spacingAndGlyphs" fill="#7d7dff" stroke="#7d7dff">Z</text></g></g>`);
document.getElementById('sketch').innerHTML = out;

/* Tracking: spread each label to its set width. */
document.querySelectorAll('.fit').forEach(e => {
  const s = (e.dataset.w - e.getBoundingClientRect().width) / (e.textContent.length - 1);
  e.style.letterSpacing = s + 'px'; e.style.marginRight = -s + 'px';
});
</script>
</body>
</html>
